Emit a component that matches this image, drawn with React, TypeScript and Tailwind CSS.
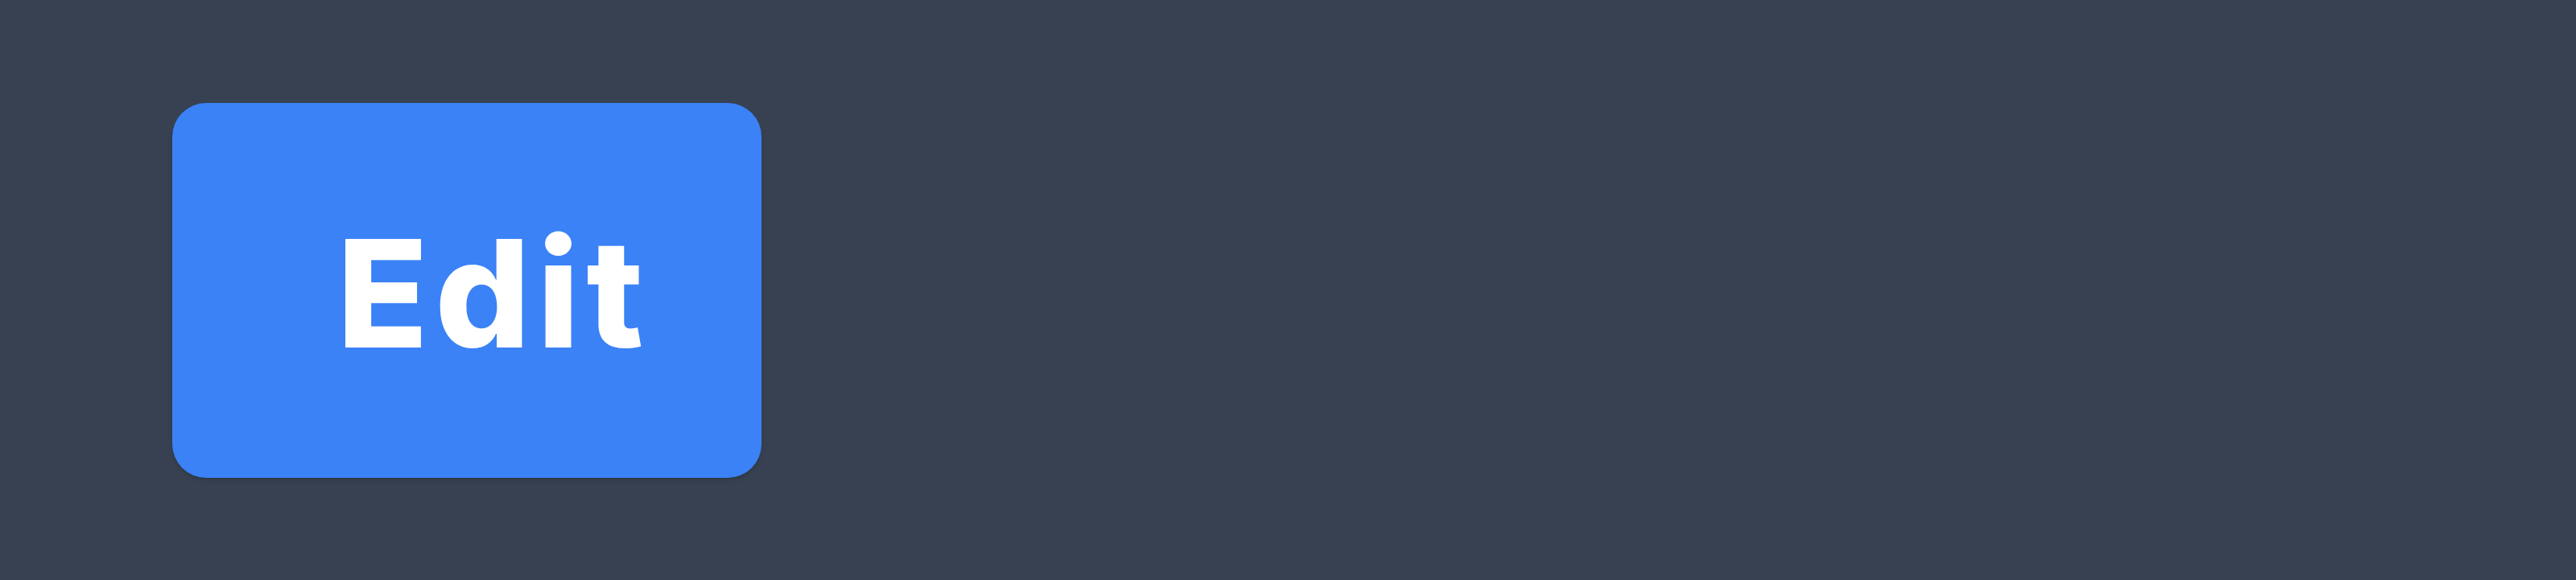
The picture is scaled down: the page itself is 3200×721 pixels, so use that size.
const App = () => (
  <div className="min-h-[721px] w-full bg-[#374151] pt-[128px] pl-[214px]">
    <button
      type="button"
      className="flex h-[466px] w-[732px] items-center justify-center rounded-[42px] bg-[#3b82f6] pt-[8px] pl-[66px] text-[186px] font-extrabold leading-none tracking-[0.045em] text-white shadow-md"
      style={{ fontFamily: "Inter, 'Noto Sans', sans-serif" }}
    >
      Edit
    </button>
  </div>
);

export default App;
